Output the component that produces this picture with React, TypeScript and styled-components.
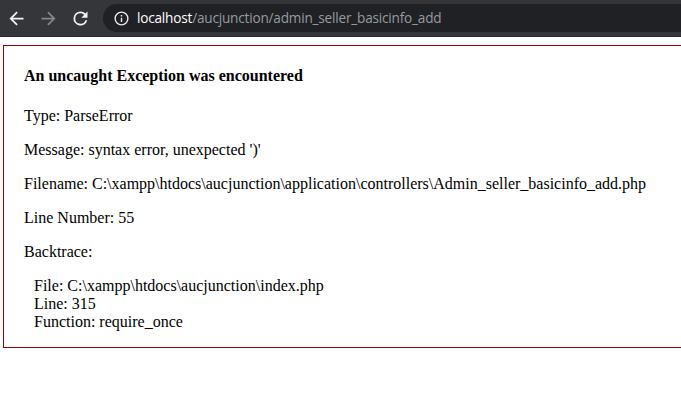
import React from 'react';
import styled, { createGlobalStyle } from 'styled-components';

const GlobalStyle = createGlobalStyle`
  * { box-sizing: border-box; }
  html, body { margin: 0; background: #fff; overflow: hidden; }
`;

const Page = styled.div`
  width: 681px;
  height: 411px;
  overflow: hidden;
  background: #fff;
`;

const Toolbar = styled.header`
  height: 37px;
  display: flex;
  align-items: flex-start;
  background: #35363a;
  border-bottom: 1px solid #292b2d;
  padding: 4px 0 0 0.5px;
`;

const NavButton = styled.button<{ $dim?: boolean }>`
  width: 32px;
  height: 28px;
  flex: none;
  padding: 0;
  border: 0;
  background: none;
  display: flex;
  align-items: center;
  justify-content: center;
  color: ${(p) => (p.$dim ? '#85868a' : '#f1f3f4')};
`;

const AddressBar = styled.div`
  flex: 1;
  height: 28px;
  display: flex;
  align-items: center;
  background: #202124;
  border-radius: 14px 0 0 14px;
  margin-left: 6.5px;
  padding-left: 9.5px;
  gap: 7.5px;
  color: #e8eaed;
`;

const Url = styled.span`
  font: 13.6px/18px "Open Sans", sans-serif;
  letter-spacing: -0.2px;
  color: #969ba1;
  white-space: nowrap;
`;

const Host = styled.span`
  color: #fff;
`;

const ErrorBox = styled.main`
  margin: 8px 0 0 3px;
  height: 303px;
  border: 1px solid #900;
  border-right: 0;
  padding: 21px 0 0 20px;
  font: 16px/18px "Liberation Serif", serif;
  color: #000;
`;

const Title = styled.h4`
  margin: 0 0 22px;
  font-size: 16px;
  line-height: 18px;
`;

const Line = styled.p`
  margin: 0 0 16px;
  white-space: nowrap;
`;

const Trace = styled.p`
  margin: 0 0 0 10px;
`;

export default function App() {
  return (
    <Page>
      <GlobalStyle />
      <Toolbar>
        <NavButton aria-label="Back">
          <svg width="21" height="21" viewBox="0 0 24 24" fill="currentColor">
            <path d="M20 11H7.83l5.59-5.59L12 4l-8 8 8 8 1.41-1.41L7.83 13H20z" />
          </svg>
        </NavButton>
        <NavButton $dim aria-label="Forward">
          <svg width="21" height="21" viewBox="0 0 24 24" fill="currentColor">
            <path d="M12 4l-1.41 1.41L16.17 11H4v2h12.17l-5.58 5.59L12 20l8-8z" />
          </svg>
        </NavButton>
        <NavButton aria-label="Reload">
          <svg width="21" height="21" viewBox="0 0 24 24" fill="currentColor">
            <path d="M17.65 6.35A7.96 7.96 0 0 0 12 4a8 8 0 1 0 7.73 10h-2.08A6 6 0 1 1 12 6c1.66 0 3.14.69 4.22 1.78L13 11h7V4z" />
          </svg>
        </NavButton>
        <AddressBar>
          <svg width="17" height="17" viewBox="0 0 24 24" fill="currentColor">
            <path d="M11 17h2v-6h-2zm1-15a10 10 0 1 0 0 20 10 10 0 0 0 0-20m0 18a8 8 0 1 1 0-16 8 8 0 0 1 0 16M11 9h2V7h-2z" />
          </svg>
          <Url>
            <Host>localhost</Host>/aucjunction/admin_seller_basicinfo_add
          </Url>
        </AddressBar>
      </Toolbar>
      <ErrorBox>
        <Title>An uncaught Exception was encountered</Title>
        <Line>Type: ParseError</Line>
        <Line>Message: syntax error, unexpected ')'</Line>
        <Line>Filename: C:\xampp\htdocs\aucjunction\application\controllers\Admin_seller_basicinfo_add.php</Line>
        <Line>Line Number: 55</Line>
        <Line>Backtrace:</Line>
        <Trace>
          File: C:\xampp\htdocs\aucjunction\index.php
          <br />
          Line: 315
          <br />
          Function: require_once
        </Trace>
      </ErrorBox>
    </Page>
  );
}
